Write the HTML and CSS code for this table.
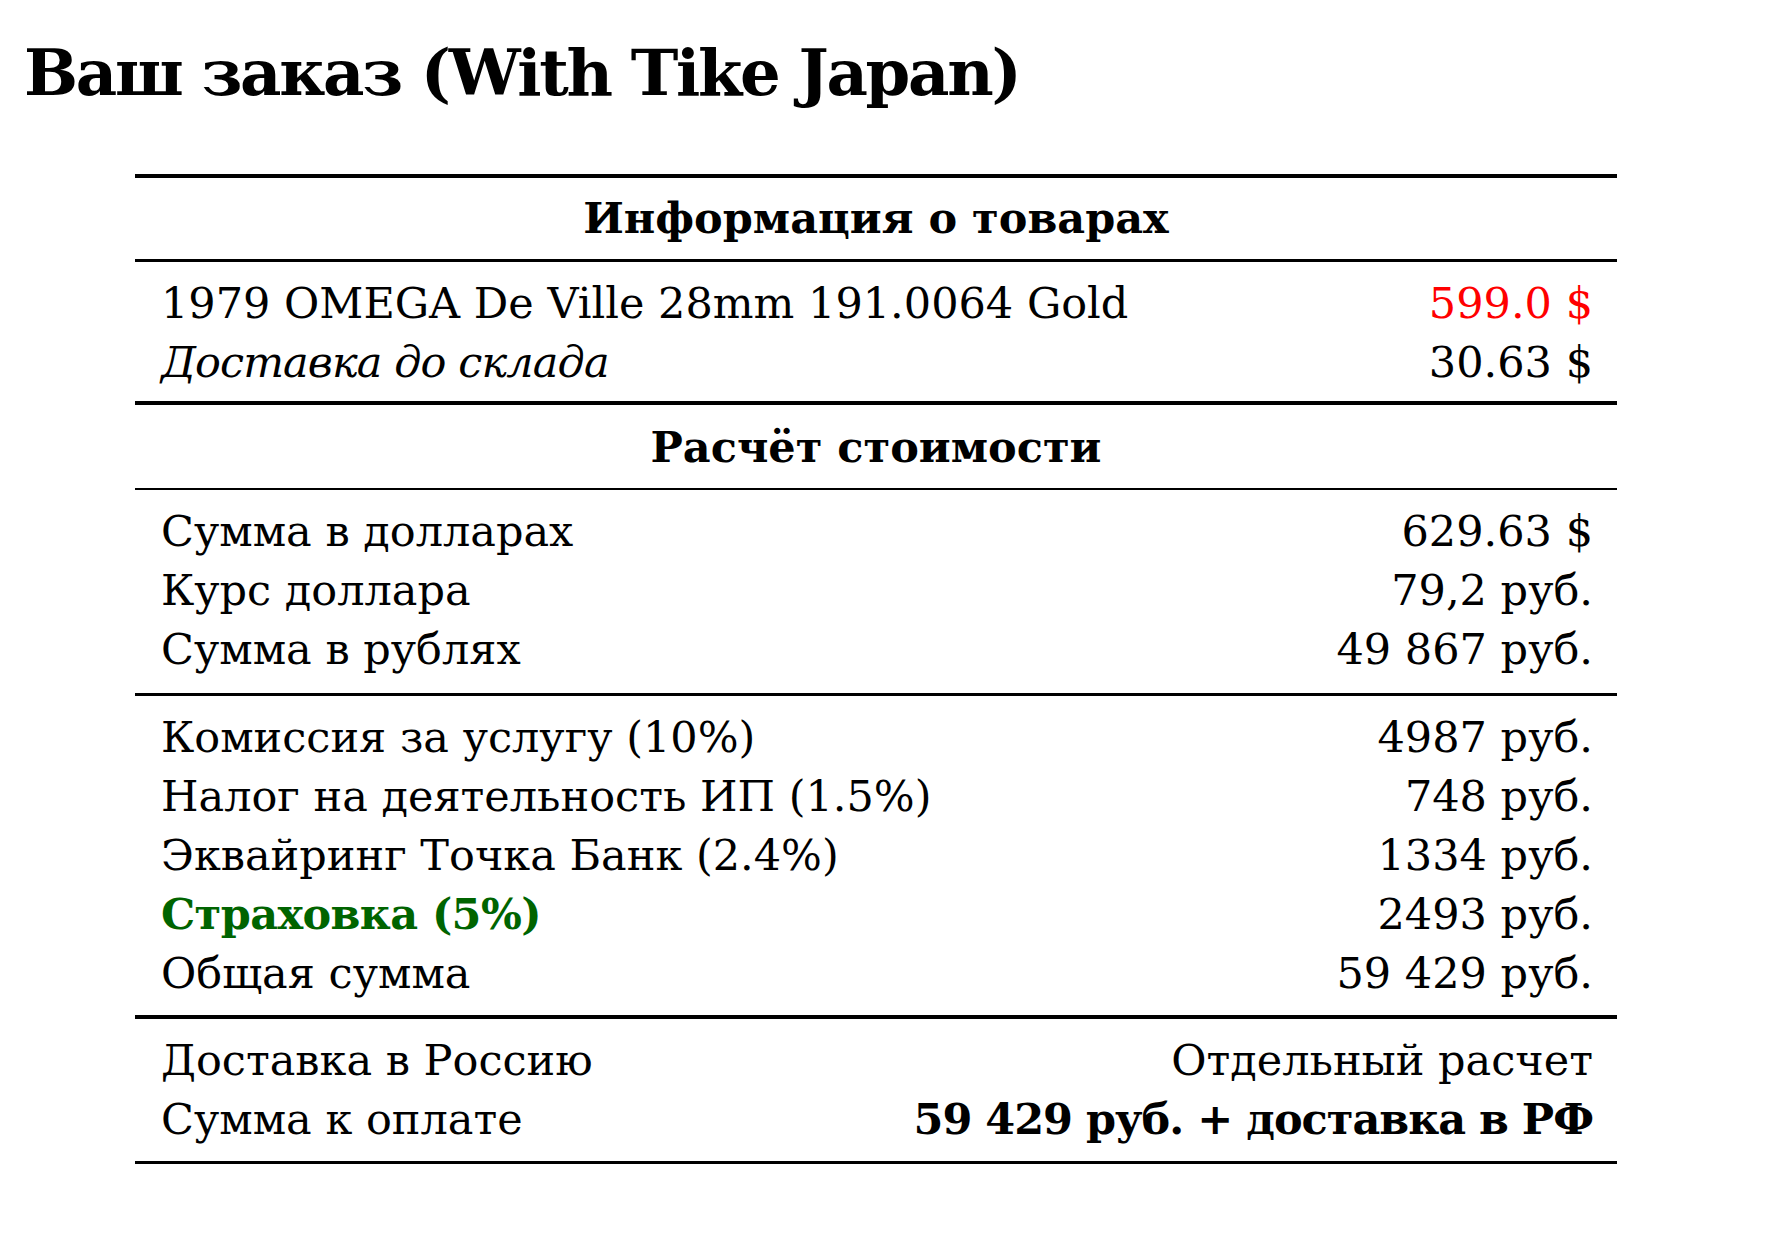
FILE: index.html
```html
<!DOCTYPE html>
<html lang="ru">
<head>
<meta charset="utf-8">
<title>Ваш заказ</title>
<link rel="stylesheet" href="styles.css">
</head>
<body>
<h1 class="title">Ваш заказ (With Tike Japan)</h1>
<div class="order">
  <div class="head rule-top4">Информация о товарах</div>
  <div class="rows rows-first rule-top3">
    <div class="row"><span>1979 OMEGA De Ville 28mm 191.0064 Gold</span><span class="red">599.0 $</span></div>
    <div class="row"><span class="it">Доставка до склада</span><span>30.63 $</span></div>
  </div>
  <div class="head head-second rule-top4">Расчёт стоимости</div>
  <div class="rows rows-third rule-top2">
    <div class="row"><span>Сумма в долларах</span><span>629.63 $</span></div>
    <div class="row"><span>Курс доллара</span><span>79,2 руб.</span></div>
    <div class="row"><span>Сумма в рублях</span><span>49 867 руб.</span></div>
  </div>
  <div class="rows rule-top3">
    <div class="row"><span>Комиссия за услугу (10%)</span><span>4987 руб.</span></div>
    <div class="row"><span>Налог на деятельность ИП (1.5%)</span><span>748 руб.</span></div>
    <div class="row"><span>Эквайринг Точка Банк (2.4%)</span><span>1334 руб.</span></div>
    <div class="row"><span class="green">Страховка (5%)</span><span>2493 руб.</span></div>
    <div class="row"><span>Общая сумма</span><span>59 429 руб.</span></div>
  </div>
  <div class="rows rule-top4 rule-bottom">
    <div class="row"><span>Доставка в Россию</span><span>Отдельный расчет</span></div>
    <div class="row"><span>Сумма к оплате</span><span class="bold">59 429 руб. + доставка в РФ</span></div>
  </div>
</div>
</body>
</html>
```
FILE: styles.css
```css
html, body {
  margin: 0;
  padding: 0;
  background: #ffffff;
  color: #000000;
  font-family: "DejaVu Serif", "Liberation Serif", serif;
}

.title {
  margin: 0;
  padding: 33px 0 0 24px;
  font-size: 64px;
  line-height: 80px;
  font-weight: bold;
  letter-spacing: -2.3px;
}

.order {
  margin: 61px 0 0 135px;
  width: 1482px;
  font-size: 43px;
}

.head {
  height: 85px;
  box-sizing: border-box;
  padding-top: 11px;
  line-height: 59px;
  text-align: center;
  font-weight: bold;
}

.head-second {
  height: 87px;
  padding-top: 13px;
}

.rows {
  padding: 12px 24px 12px 26px;
}

.rows-first {
  padding-bottom: 9px;
}

.rows-third {
  padding-bottom: 14px;
}

.row {
  display: flex;
  justify-content: space-between;
  line-height: 59px;
  white-space: nowrap;
}

.rule-top4 { border-top: 4px solid #000; }
.rule-top3 { border-top: 3px solid #000; }
.rule-top2 { border-top: 2px solid #000; }
.rule-bottom { border-bottom: 3px solid #000; }

.red { color: #ff0000; }
.green { color: #006400; font-weight: bold; letter-spacing: -0.6px; }
.it { font-style: italic; letter-spacing: -0.9px; }
.bold { font-weight: bold; letter-spacing: -1px; }
```
